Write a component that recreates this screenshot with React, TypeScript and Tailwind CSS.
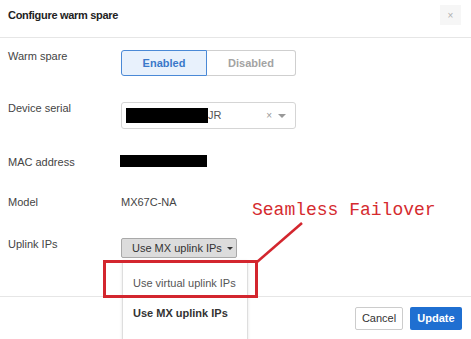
import React from 'react';

const labelCls = "w-[121px] shrink-0 pl-2 text-[11px] text-[#444]";

export default function App() {
  return (
    <div className="relative w-[471px] h-[339px] overflow-hidden bg-white font-['Liberation_Sans',Arial,sans-serif]">
      {/* header */}
      <div className="h-[38px] border-b border-[#e6e6e6] flex items-start justify-between pl-2 pr-[10px] pt-[5px]">
        <h1 className="text-[11px] leading-[20px] font-bold text-[#222] tracking-[-0.3px]">Configure warm spare</h1>
        <button className="w-[21px] h-[20px] bg-[#f6f6f6] flex items-center justify-center text-[10px] text-[#b0b0b0]">×</button>
      </div>

      {/* body */}
      <div className="pt-3">
        <div className="flex h-[52px]">
          <div className={labelCls + " leading-[12px]"}>Warm spare</div>
          <div className="flex h-[26px] text-[11px] font-bold">
            <button className="w-[86px] border border-[#4a89d6] bg-[#e8f1fc] text-[#3a78c9] rounded-l-[3px]">Enabled</button>
            <button className="w-[89px] border border-l-0 border-[#cfcfcf] text-[#a3a3a3] rounded-r-[3px]">Disabled</button>
          </div>
        </div>

        <div className="flex h-[53px]">
          <div className={labelCls + " leading-[12px]"}>Device serial</div>
          <div className="w-[175px] h-[27px] border border-[#d5d5d5] rounded-[3px] flex items-center pl-[4px] pr-[9px]">
            <span className="w-[82px] h-[15px] bg-black" />
            <span className="text-[11px] text-[#555]">JR</span>
            <span className="ml-auto text-[10px] text-[#999]">×</span>
            <span className="ml-[6px] w-0 h-0 border-l-[4px] border-r-[4px] border-t-[4px] border-l-transparent border-r-transparent border-t-[#999]" />
          </div>
        </div>

        <div className="flex h-[40px]">
          <div className={labelCls + " leading-[14px]"}>MAC address</div>
          <span className="ml-[-1px] w-[87px] h-[12px] bg-black" />
        </div>

        <div className="flex h-[42px]">
          <div className={labelCls + " leading-[14px]"}>Model</div>
          <div className="text-[11px] leading-[14px] text-[#444]">MX67C-NA</div>
        </div>

        <div className="flex h-[59px]">
          <div className={labelCls + " leading-[14px]"}>Uplink IPs</div>
          <div className="relative">
            <button className="mt-[1px] w-[116px] h-[20px] bg-[#dcdcdc] border border-[#a9a9a9] rounded-[2px] flex items-center pl-[10px] text-[11px] text-[#333]">
              Use MX uplink IPs
              <span className="ml-[5px] w-0 h-0 border-l-[3px] border-r-[3px] border-t-[3px] border-l-transparent border-r-transparent border-t-[#333]" />
            </button>
            <div className="absolute z-10 left-[1px] top-[23px] w-[126px] h-[100px] bg-white border border-[#dedede] shadow-sm text-[11px]">
              <div className="pl-[10px] pt-[14px] h-[38px] text-[#555]">Use virtual uplink IPs</div>
              <div className="pl-[10px] pt-[6px] font-bold text-[#333]">Use MX uplink IPs</div>
            </div>
          </div>
        </div>
      </div>

      {/* footer */}
      <div className="border-t border-[#e6e6e6] pt-[10px] pr-[9px] flex justify-end gap-[7px]">
        <button className="w-[48px] h-[23px] border border-[#cccccc] rounded-[2px] text-[11px] text-[#333]">Cancel</button>
        <button className="w-[52px] h-[23px] bg-[#1f6fd1] rounded-[2px] text-[11px] font-bold text-white">Update</button>
      </div>

      {/* annotation */}
      <svg className="absolute inset-0 z-20 pointer-events-none" width="471" height="339">
        <line x1="302" y1="223" x2="257" y2="262" stroke="#d3262e" strokeWidth="2.5" />
        <rect x="104.5" y="261.5" width="152" height="35" fill="none" stroke="#d3262e" strokeWidth="3" />
      </svg>
      <div className="absolute z-20 left-[252px] top-[201px] font-['Liberation_Mono',monospace] text-[18px] leading-[18px] text-[#d52b2f]">
        Seamless Failover
      </div>
    </div>
  );
}
